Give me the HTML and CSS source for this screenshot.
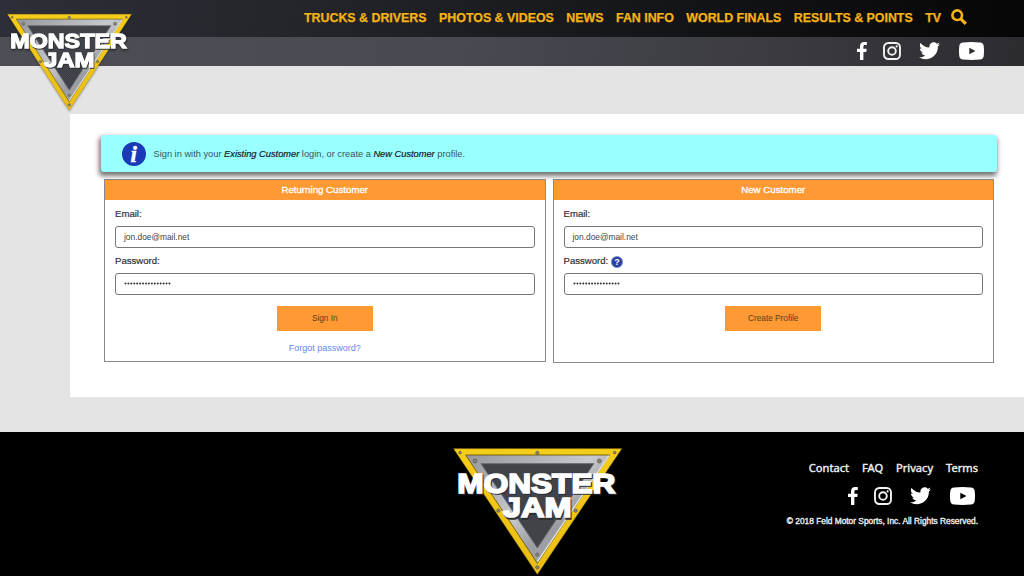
FILE: index.html
```html
<!DOCTYPE html>
<html lang="en">
<head>
<meta charset="utf-8">
<title>Monster Jam - Sign In</title>
<link rel="stylesheet" href="styles.css">
</head>
<body>
<svg class="defs" aria-hidden="true">
  <defs>
    <linearGradient id="steel" x1="0" y1="0" x2="1" y2="1">
      <stop offset="0" stop-color="#95979a"/><stop offset=".25" stop-color="#b0b2b5"/><stop offset=".45" stop-color="#c8c9cc"/><stop offset=".65" stop-color="#999ca0"/><stop offset="1" stop-color="#b5b7ba"/>
    </linearGradient>
    <linearGradient id="gold" x1="0" y1="0" x2="0" y2="1">
      <stop offset="0" stop-color="#f6cd18"/><stop offset="1" stop-color="#eabd14"/>
    </linearGradient>
    <pattern id="mesh" width="8" height="8" patternUnits="userSpaceOnUse">
      <rect width="8" height="8" fill="#484b50"/><circle cx="2" cy="2" r="1.7" fill="#2d3036"/><circle cx="6" cy="6" r="1.7" fill="#2d3036"/>
    </pattern>
    <symbol id="logo" viewBox="40 20 510 385" preserveAspectRatio="none">
      <path d="M42 25H546L293 402Z" fill="url(#gold)" stroke="#b08f1c" stroke-width="1.5"/>
      <path d="M78 44H510L293 369Z" fill="url(#steel)" stroke="#77640f" stroke-width="3"/>
      <path d="M508 46L293 365" stroke="#e4e5e7" stroke-width="4"/>
      <path d="M124 70H462L293 323Z" fill="url(#mesh)" stroke="#65686d" stroke-width="3"/>
      <g fill="#87836f" stroke="#5b5950" stroke-width="2">
        <circle cx="61" cy="37" r="4"/><circle cx="293" cy="38" r="5"/><circle cx="525" cy="37" r="4"/>
        <circle cx="106" cy="62" r="6"/><circle cx="479" cy="62" r="6"/><circle cx="176" cy="211" r="5"/>
        <circle cx="408" cy="211" r="5"/><circle cx="293" cy="343" r="5"/><circle cx="293" cy="381" r="5"/>
      </g>
      <g class="logo-shade">
        <text x="56" y="162" textLength="474" lengthAdjust="spacingAndGlyphs">MONSTER</text>
        <text x="193" y="236" textLength="206" lengthAdjust="spacingAndGlyphs">JAM</text>
      </g>
      <g class="logo-word">
        <text x="53" y="157" textLength="474" lengthAdjust="spacingAndGlyphs">MONSTER</text>
        <text x="190" y="231" textLength="206" lengthAdjust="spacingAndGlyphs">JAM</text>
      </g>
    </symbol>
    <symbol id="facebook" viewBox="0 0 10 18"><path d="M3 18V10H0V6.8H3V4.3C3 1.5 4.6 0 7.2 0H9.8V3.1H8C6.8 3.1 6.4 3.7 6.4 4.8V6.8H9.7L9.2 10H6.4V18Z" fill="#fff"/></symbol>
    <symbol id="instagram" viewBox="0 0 18 18"><g fill="none" stroke="#f2f2f2" stroke-width="1.9"><rect x="1" y="1" width="16" height="16" rx="4.3"/><circle cx="9" cy="9" r="3.8"/></g><circle cx="13.6" cy="4.4" r="1.1" fill="#f2f2f2"/></symbol>
    <symbol id="twitter" viewBox="0 0 24 20"><path d="M24 2.4C23.1 2.8 22.2 3 21.2 3.1C22.2 2.5 23 1.5 23.3.4C22.3 1 21.3 1.4 20.2 1.6C17.1-1.6 11.1.7 11.9 6.1C7.8 5.9 4.2 3.9 1.7.9C.4 3.2 1 6 3.2 7.5C2.4 7.4 1.7 7.2 1 6.8C1 9.2 2.6 11.2 4.9 11.7C4.2 11.9 3.5 11.9 2.7 11.8C3.3 13.7 5.1 15.1 7.3 15.2C5.2 16.8 2.7 17.5 0 17.2C9.3 23 21.8 17 21.6 4.9C22.5 4.2 23.3 3.3 24 2.4Z" fill="#fff"/></symbol>
    <symbol id="youtube" viewBox="0 0 25 18"><path fill-rule="evenodd" d="M4 .5Q12.5-.4 21 .5Q24.3.8 24.7 4Q25.3 9 24.7 14Q24.3 17.2 21 17.5Q12.5 18.4 4 17.5Q.7 17.2.3 14Q-.3 9 .3 4Q.7.8 4 .5ZM10.3 5.7V12.3L16.5 9Z" fill="#fff"/></symbol>
  </defs>
</svg>

<header class="site-header">
  <svg class="header-logo" role="img" aria-label="Monster Jam"><use href="#logo"/></svg>
  <nav class="main-nav">
    <a>TRUCKS &amp; DRIVERS</a><a>PHOTOS &amp; VIDEOS</a><a>NEWS</a><a>FAN INFO</a><a>WORLD FINALS</a><a>RESULTS &amp; POINTS</a><a>TV</a>
    <svg class="search" viewBox="0 0 16 16"><circle cx="6.2" cy="6.2" r="4.8" fill="none" stroke="#f5b316" stroke-width="2.6"/><path d="M9.8 9.8L14.8 14.8" stroke="#f5b316" stroke-width="3.2"/></svg>
  </nav>
  <div class="social-bar">
    <div class="social"><svg class="fb"><use href="#facebook"/></svg><svg class="ig"><use href="#instagram"/></svg><svg class="tw"><use href="#twitter"/></svg><svg class="yt"><use href="#youtube"/></svg></div>
  </div>
</header>

<main class="page">
  <section class="card">
    <div class="notice">
      <svg class="info" viewBox="0 0 24 24"><circle cx="12" cy="12" r="12" fill="#1939b7"/><text class="info-letter" x="11.7" y="19.5" text-anchor="middle">i</text></svg>
      <p>Sign in with your <em>Existing Customer</em> login, or create a <em>New Customer</em> profile.</p>
    </div>
    <div class="panels">
      <form class="panel returning">
        <h2>Returning Customer</h2>
        <div class="fields">
          <label>Email:</label>
          <div class="input">jon.doe@mail.net</div>
          <label>Password:</label>
          <div class="input"><svg class="mask" viewBox="0 0 47 3"><path d="M1.5 1.5H47"/></svg></div>
          <button type="button">Sign In</button>
          <a class="forgot">Forgot password?</a>
        </div>
      </form>
      <form class="panel">
        <h2>New Customer</h2>
        <div class="fields">
          <label>Email:</label>
          <div class="input">jon.doe@mail.net</div>
          <label>Password: <svg class="help" viewBox="0 0 12 12"><circle cx="6" cy="6" r="5.6" fill="#2842a8" stroke="#7886bd" stroke-width=".7"/><text class="help-mark" x="6" y="9" text-anchor="middle">?</text></svg></label>
          <div class="input"><svg class="mask" viewBox="0 0 47 3"><path d="M1.5 1.5H47"/></svg></div>
          <button type="button">Create Profile</button>
        </div>
      </form>
    </div>
  </section>
</main>

<footer class="site-footer">
  <div></div>
  <svg class="footer-logo" role="img" aria-label="Monster Jam"><use href="#logo"/></svg>
  <div class="footer-info">
    <nav class="footer-links"><a>Contact</a><a>FAQ</a><a>Privacy</a><a>Terms</a></nav>
    <div class="social"><svg class="fb"><use href="#facebook"/></svg><svg class="ig"><use href="#instagram"/></svg><svg class="tw"><use href="#twitter"/></svg><svg class="yt"><use href="#youtube"/></svg></div>
    <p class="copyright">© 2018 Feld Motor Sports, Inc. All Rights Reserved.</p>
  </div>
</footer>
</body>
</html>
```
FILE: styles.css
```css
* { box-sizing: border-box; }
body { margin: 0; height: 576px; overflow: hidden; background: #e4e4e4; color: #333; font-family: "Liberation Sans", Arial, sans-serif; }
svg { display: block; flex: none; }
p, h2 { margin: 0; font-weight: 400; }
.defs { position: absolute; width: 0; height: 0; }

.site-header { position: relative; height: 66px; }
.header-logo { position: absolute; left: 6.8px; top: 12.8px; width: 125.5px; height: 98px; z-index: 2; filter: drop-shadow(0 1px 1px rgba(0, 0, 0, .35)); }
.main-nav { display: flex; height: 37px; padding-left: 304px; gap: 12.5px; align-items: center; background: linear-gradient(100deg, #2d2f38 0%, #23252a 30%, #141518 65%, #060606 100%); }
.main-nav a { margin-top: -1px; color: #f5b316; font-size: 12.4px; font-weight: 700; line-height: 16px; white-space: nowrap; -webkit-text-stroke: .25px #f5b316; }
.search { width: 16px; height: 16px; margin: -4px 0 0 -3px; }
.social-bar { display: flex; height: 29px; padding-right: 40px; justify-content: flex-end; align-items: center; background: linear-gradient(100deg, #4d4f56 0%, #484a51 45%, #3b3b41 75%, #2b2b30 100%); }
.social { display: flex; align-items: center; }
.fb { width: 10px; height: 18px; }
.ig { width: 18px; height: 18px; margin-left: 16px; }
.tw { width: 21px; height: 18px; margin-left: 18px; }
.yt { width: 25px; height: 18px; margin-left: 19px; }
.social-bar .social { padding-bottom: 2px; }

.page { height: 366px; padding: 48px 0 35px 70px; }
.card { height: 283px; padding: 21px 27px 0 31px; background: #fff; }
.notice { display: flex; height: 37px; padding-left: 20.5px; align-items: center; gap: 8px; border-radius: 3px; background: #9ff; box-shadow: -1px 3px 5px 1px rgba(0, 0, 0, .55); }
.info { width: 24px; height: 24px; }
.info-letter { fill: #fff; stroke: #fff; stroke-width: .5; font: italic 700 23px "Liberation Serif", serif; }
.notice p { color: #3a5555; font-size: 9.27px; white-space: nowrap; }
.notice em { color: #152020; -webkit-text-stroke: .2px #152020; }
.panels { position: relative; display: flex; padding: 7px 3px 0; gap: 7px; align-items: flex-start; }
.panel { flex: 1; height: 184px; border: 1px solid #898989; background: #fff; }
.panel.returning { height: 183px; }
.panel h2 { height: 20px; background: #f93; color: #fff; font-size: 9.7px; line-height: 19px; text-align: center; -webkit-text-stroke: .3px #fff; }
.fields { display: flex; flex-direction: column; padding: 8px 10px 0; }
.fields label { display: flex; height: 12px; align-items: center; gap: 3px; color: #333; font-size: 9.6px; line-height: 12px; -webkit-text-stroke: .2px #333; }
.input { display: flex; height: 22px; margin: 5.5px 0 7.7px; padding-left: 8px; align-items: center; border: 1px solid #777; border-radius: 3px; color: #444; font-size: 8.4px; }
.mask { width: 47px; height: 3px; margin-bottom: 1px; fill: none; stroke: #333; stroke-width: 2; stroke-linecap: round; stroke-dasharray: 0 2.93; }
.help { width: 12px; height: 12px; margin-top: 1px; }
.help-mark { fill: #fff; font: 700 9px "Liberation Sans", sans-serif; stroke: none; }
.fields button { width: 96px; height: 25px; margin-top: 3.3px; padding: 0; align-self: center; border: 0; background: #f93; color: #59401c; font: 8.25px "Liberation Sans", Arial, sans-serif; }
.forgot { margin-top: 11.5px; align-self: center; color: #6289e9; font-size: 9px; line-height: 12px; }

.site-footer { display: grid; grid-template-columns: 453px 170px 1fr; height: 144px; background: #000; color: #eee; }
.footer-logo { width: 170px; height: 128.3px; margin-top: 14.7px; }
.footer-info { display: flex; flex-direction: column; align-items: flex-end; padding: 28px 46px 0 0; }
.footer-links { display: flex; gap: 13px; font: 11.1px/15px "Noto Sans", sans-serif; -webkit-text-stroke: .4px #eee; }
.footer-info .social { margin: 12px 3px 0 0; }
.copyright { margin-top: 10px; font-size: 8.35px; line-height: 12px; white-space: nowrap; -webkit-text-stroke: .35px #eee; }
.logo-word, .logo-shade { font: 700 83px "Liberation Sans", sans-serif; stroke-width: 5; stroke-linejoin: miter; }
.logo-word { fill: #fff; stroke: #fff; }
.logo-shade { fill: #2b2d31; stroke: #2b2d31; }
```
